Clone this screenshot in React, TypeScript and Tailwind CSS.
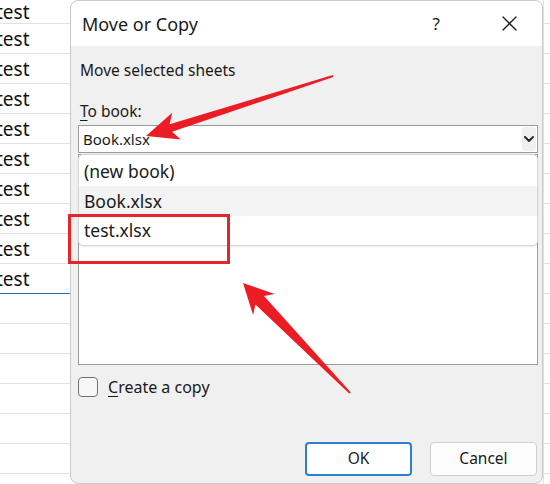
import React from "react";

const rows = Array.from({ length: 16 }, (_, i) => i);

function SheetColumn({ withText }: { withText: boolean }) {
  return (
    <div className="flex flex-col">
      {rows.map((i) => (
        <div
          key={i}
          className={`flex items-center border-b ${
            i === 9 && withText ? "border-[#1c6fc4]" : "border-[#e1e1e1]"
          } ${i === 0 ? "h-[24px]" : "h-[30px]"}`}
        >
          {withText && i < 10 ? (
            <span className="-ml-[4px] pt-[2px] text-[19px] leading-none text-[#111]">test</span>
          ) : null}
        </div>
      ))}
    </div>
  );
}

function Chevron() {
  return (
    <svg width="10" height="6" viewBox="0 0 10 6" fill="none">
      <path d="M1 1l4 4 4-4" stroke="#222" strokeWidth="1.8" strokeLinecap="round" strokeLinejoin="round" />
    </svg>
  );
}

function CloseIcon() {
  return (
    <svg width="15" height="15" viewBox="0 0 15 15" fill="none">
      <path d="M1 1l13 13M14 1L1 14" stroke="#1a1a1a" strokeWidth="1.3" strokeLinecap="round" />
    </svg>
  );
}

function Annotations() {
  return (
    <svg className="pointer-events-none absolute inset-0" width="550" height="484" viewBox="0 0 550 484">
      <polygon
        fill="#ec1c24"
        points="146,136 180.8,139.6 172,131.8 333.3,77 332.7,75 169.6,124.2 172.2,112.8"
      />
      <polygon
        fill="#ec1c24"
        points="243,283 274.7,294 264,296 350.8,392.4 349.2,393.6 255.4,304.4 253.1,315"
      />
      <rect x="69.5" y="215.5" width="159" height="47" fill="none" stroke="#e3262c" strokeWidth="3" />
    </svg>
  );
}

export default function App() {
  return (
    <div className="relative h-[484px] w-[550px] overflow-hidden bg-white font-['Noto_Sans',sans-serif] text-[#1a1a1a]">
      <div className="flex h-full">
        <div className="w-[70px] shrink-0">
          <SheetColumn withText />
        </div>

        {/* dialog window */}
        <div className="flex h-[484px] w-[473px] shrink-0 flex-col overflow-hidden rounded-[8px] border border-[#c9c9c9] bg-[#f0f0f0]">
          <div className="flex h-[45px] shrink-0 items-center bg-white pl-[11px]">
            <span className="text-[18px] leading-none">Move or Copy</span>
            <span className="ml-auto mr-[62px] text-[17px] leading-none">?</span>
            <span className="mr-[25px] flex items-center">
              <CloseIcon />
            </span>
          </div>

          <div className="flex flex-1 flex-col pl-[7px] pr-[4px]">
            <div className="mt-[14px] pl-[2px] text-[15.5px] leading-[20px]">Move selected sheets</div>
            <div className="mt-[21px] pl-[2px] text-[15.5px] leading-[20px]">
              <span className="underline underline-offset-[3px]">T</span>o book:
            </div>

            <div className="mt-[4px] flex h-[28px] items-center border border-[#9b9b9b] bg-white pl-[4px] pr-[1px]">
              <span className="text-[15px] leading-none">Book.xlsx</span>
              <span className="ml-auto flex h-[24px] w-[14px] items-center justify-center rounded-[3px] bg-[#f0f0f0]">
                <Chevron />
              </span>
            </div>

            <div className="relative mt-[1px] h-[211px] border border-[#9b9b9b] bg-white">
              <div className="absolute -left-px -right-px -top-px rounded-[5px] border border-[#d6d6d6] bg-white pt-px shadow-[0_1px_2px_rgba(0,0,0,0.08)]">
                <div className="flex h-[30px] items-center pl-[5px] text-[17.5px]">(new book)</div>
                <div className="flex h-[30px] items-center bg-[#f3f3f3] pl-[5px] text-[17.5px]">Book.xlsx</div>
                <div className="flex h-[29px] items-center pl-[5px] text-[17.5px]">test.xlsx</div>
              </div>
            </div>

            <div className="mt-[12px] flex items-center">
              <span className="h-[20px] w-[20px] rounded-[4px] border border-[#6f6f6f] bg-[#f7f7f7]" />
              <span className="ml-[10px] text-[16px] leading-[20px]">
                <span className="underline underline-offset-[3px]">C</span>reate a copy
              </span>
            </div>

            <div className="mt-[45px] flex justify-end gap-[18px] pr-[1px]">
              <button className="flex h-[34px] w-[107px] items-center justify-center rounded-[4px] border-2 border-[#2f7fd0] bg-white text-[15.5px]">
                OK
              </button>
              <button className="flex h-[34px] w-[107px] items-center justify-center rounded-[4px] border border-[#cfcfcf] bg-[#fcfcfc] text-[15.5px]">
                Cancel
              </button>
            </div>
          </div>
        </div>

        <div className="relative flex-1 border-l border-[#e1e1e1]">
          <SheetColumn withText={false} />
        </div>
      </div>
      <Annotations />
    </div>
  );
}
